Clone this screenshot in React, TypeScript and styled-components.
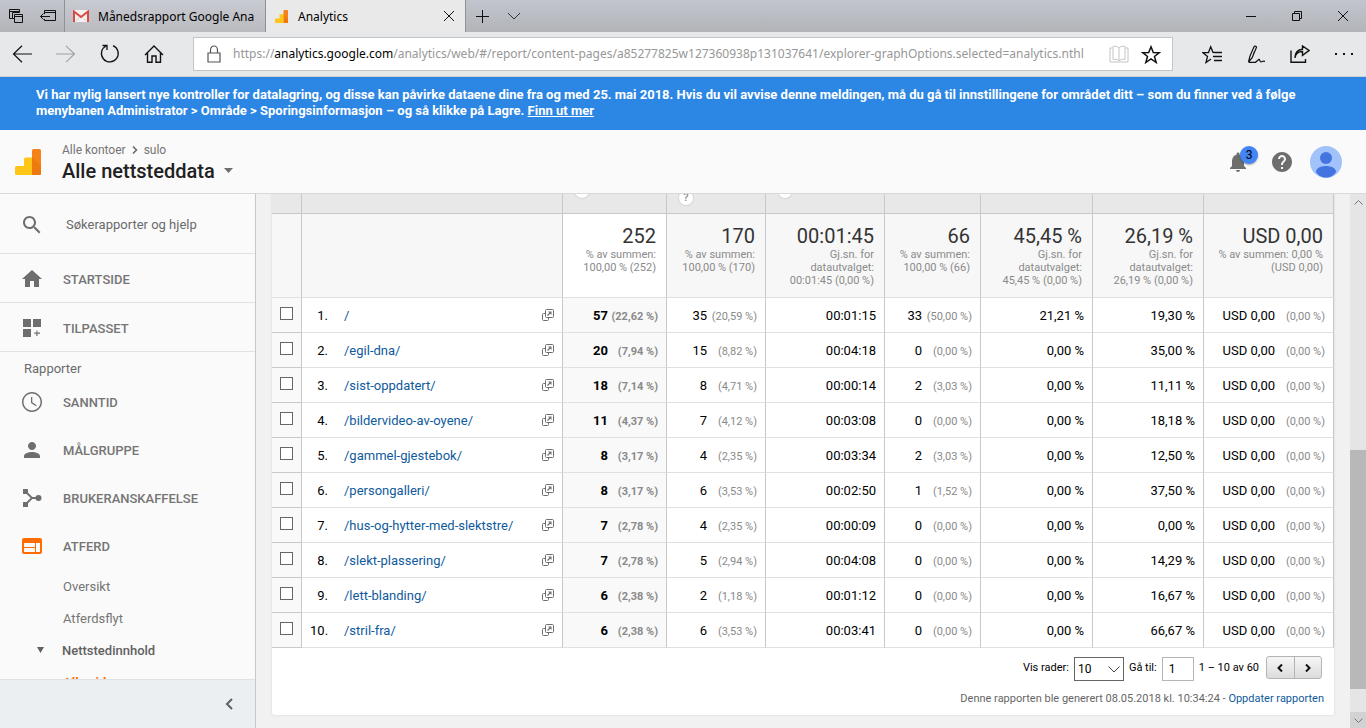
import React from 'react';
import styled, { createGlobalStyle, css } from 'styled-components';

const GlobalStyle = createGlobalStyle`
  *, *::before, *::after { box-sizing: border-box; }
  html, body { margin: 0; height: 100%; }
  body { font-family: Roboto, "Liberation Sans", sans-serif; font-size: 13px; color: #000; background: #f1f1f1; }
  button, input, select { font: inherit; color: inherit; margin: 0; }
  button { padding: 0; border: 0; background: none; display: flex; align-items: center; justify-content: center; }
  a { text-decoration: none; color: inherit; }
  svg { display: block; flex: none; }
`;

const Window = styled.div`
  height: 100vh;
  display: flex;
  flex-direction: column;
  overflow: hidden;
`;

/* ---------- Browser frame ---------- */

const TabStrip = styled.div`
  flex: none;
  height: 32px;
  display: flex;
  background: linear-gradient(#c2c5ce, #b2b4b8);
  font-family: "Noto Sans", "Open Sans", sans-serif;
  font-size: 12px;
`;

const StripButton = styled.button<{ $width: number }>`
  width: ${p => p.$width}px;
  height: 32px;
`;

const BrowserTab = styled.div<{ $active?: boolean }>`
  width: 201px;
  display: flex;
  align-items: center;
  gap: 9px;
  padding: 0 9px 0 8px;
  border-left: 1px solid #8f9196;
  ${p => p.$active
    ? css`background: #e9e9ea; border-right: 1px solid #8f9196; padding: 0 10px 0 9px; gap: 10px;`
    : css`background: linear-gradient(#c9cbd2, #b9bbbf);`}
`;

const TabTitle = styled.span`
  flex: 1;
  min-width: 0;
  overflow: hidden;
  white-space: nowrap;
`;

const Spacer = styled.div`
  flex: 1;
`;

const Toolbar = styled.div`
  flex: none;
  height: 45px;
  display: flex;
  align-items: center;
  background: #e7e8e9;
  border-bottom: 1px solid #cfd0d2;
`;

const ToolButton = styled.button`
  width: 44px;
  height: 44px;
`;

const AddressBox = styled.div`
  flex: 1;
  min-width: 0;
  height: 34px;
  margin: 0 17px;
  padding: 0 11px 0 13px;
  display: flex;
  align-items: center;
  background: #fff;
  border: 1px solid #c4c5c8;
`;

const Url = styled.div`
  flex: 1;
  min-width: 0;
  margin: 0 8px 0 12px;
  overflow: hidden;
  white-space: nowrap;
  font-family: "Noto Sans", "Open Sans", sans-serif;
  font-size: 12px;
  line-height: 20px;
  color: #979797;
  b { font-weight: 400; color: #000; }
`;

const BookWrap = styled.span`
  margin-right: 12px;
`;

/* ---------- Analytics header ---------- */

const Banner = styled.div`
  flex: none;
  padding: 10px 36px 11px;
  background: #2c86e3;
  color: #fff;
  font-weight: 700;
  font-size: 13px;
  line-height: 16px;
  a { text-decoration: underline; }
`;

const Header = styled.header`
  flex: none;
  height: 64px;
  display: flex;
  align-items: center;
  padding: 0 24px 0 15px;
  background: #fafafa;
  border-bottom: 1px solid #d9d9d9;
`;

const Titles = styled.div`
  margin-left: 21px;
  padding-top: 2px;
`;

const Crumbs = styled.nav`
  display: flex;
  align-items: center;
  gap: 6px;
  font-size: 12px;
  line-height: 16px;
  color: #757575;
`;

const ViewButton = styled.button`
  gap: 9px;
  font-size: 20px;
  line-height: 26px;
  font-weight: 500;
  color: #212121;
`;

const BellButton = styled.button`
  position: relative;
  margin-right: 20px;
`;

const Badge = styled.span`
  position: absolute;
  top: -4px;
  right: -8px;
  width: 18px;
  height: 18px;
  border-radius: 9px;
  background: #4285f4;
  box-shadow: 0 1px 2px rgba(0, 0, 0, 0.35);
  font-size: 12px;
  line-height: 18px;
  text-align: center;
`;

const AvatarButton = styled.button`
  margin-left: 16px;
`;

/* ---------- Side navigation ---------- */

const Workspace = styled.div`
  flex: 1;
  min-height: 0;
  display: flex;
`;

const Sidebar = styled.aside`
  flex: none;
  width: 256px;
  display: flex;
  flex-direction: column;
  background: #fafafa;
  border-right: 1px solid #c8c8c8;
  color: #6b6b6b;
`;

const NavScroll = styled.nav`
  flex: 1;
  min-height: 0;
  overflow: hidden;
`;

const SearchRow = styled.label`
  height: 60px;
  display: flex;
  align-items: center;
  gap: 22px;
  padding: 2px 20px 0;
  border-bottom: 1px solid #e2e2e2;
`;

const SearchInput = styled.input`
  width: 160px;
  padding: 0;
  border: 0;
  background: none;
  &::placeholder { color: #6b6b6b; opacity: 1; }
`;

const NavItem = styled.a<{ $ruled?: boolean }>`
  height: ${p => (p.$ruled ? 49 : 48)}px;
  display: flex;
  align-items: center;
  gap: 19px;
  padding: 0 20px;
  font-weight: 500;
  color: #757575;
  ${p => p.$ruled && css`border-bottom: 1px solid #e2e2e2; padding-top: 2px;`}
`;

const NavHeading = styled.div`
  padding: 7px 24px 0;
  line-height: 19px;
`;

const SubItem = styled.a<{ $tone?: 'open' | 'current' }>`
  height: 32px;
  display: flex;
  align-items: center;
  padding-left: 63px;
  color: #757575;
  ${p => p.$tone === 'open' && css`padding-left: 36px; gap: 17px; font-weight: 500; color: #616161;`}
  ${p => p.$tone === 'current' && css`font-weight: 700; color: #ff6d00;`}
`;

const SidebarFooter = styled.div`
  flex: none;
  height: 49px;
  display: flex;
  align-items: center;
  justify-content: flex-end;
  padding-right: 14px;
  background: #ebeff2;
  border-top: 1px solid #dfe2e4;
`;

const CollapseButton = styled.button`
  width: 24px;
  height: 24px;
`;

/* ---------- Report ---------- */

const Main = styled.main`
  flex: 1;
  min-width: 0;
  padding: 0 16px;
  overflow: hidden;
  background: #f1f1f1;
`;

const Card = styled.section`
  background: #fff;
  border-radius: 0 0 2px 2px;
  box-shadow: 0 0 2px rgba(0, 0, 0, 0.16);
`;

const DataTable = styled.table`
  width: 100%;
  table-layout: fixed;
  border-collapse: separate;
  border-spacing: 0;
`;

const Column = styled.col<{ $width?: number }>`
  width: ${p => (p.$width ? `${p.$width}px` : 'auto')};
`;

const HeadCell = styled.th`
  padding: 0;
  background: #e8e8e8;
  border-right: 1px solid #c8c8c8;
  border-bottom: 1px solid #c8c8c8;
`;

const HeadClip = styled.div<{ $low?: boolean }>`
  height: 19px;
  display: flex;
  align-items: flex-end;
  overflow: hidden;
  padding: 0 0 ${p => (p.$low ? 8 : 15)}px 12px;
`;

const HelpDot = styled.span`
  flex: none;
  width: 14px;
  height: 14px;
  border-radius: 7px;
  background: #fff;
  box-shadow: 0 0 1px 1px #d6d6d6;
  color: #8a8a8a;
  font-size: 11px;
  line-height: 14px;
  font-weight: 500;
  text-align: center;
`;

const SummaryCell = styled.td<{ $sorted?: boolean }>`
  height: 84px;
  padding: 10px 10px 8px 4px;
  vertical-align: top;
  text-align: right;
  background: ${p => (p.$sorted ? '#fff' : '#f7f7f7')};
  border-right: 1px solid #c8c8c8;
  border-bottom: 1px solid #e0e0e0;
`;

const SummaryValue = styled.div`
  font-size: 20px;
  line-height: 24px;
  color: #333;
`;

const SummaryNote = styled.div`
  font-size: 11px;
  line-height: 13px;
  color: #8a8a8a;
  white-space: nowrap;
`;

const Cell = styled.td<{ $tinted?: boolean; $bold?: boolean }>`
  height: 35px;
  padding: 0 8px;
  text-align: right;
  white-space: nowrap;
  background: ${p => (p.$tinted ? '#f9f9f9' : '#fff')};
  font-weight: ${p => (p.$bold ? 700 : 400)};
  border-right: 1px solid #c8c8c8;
  border-bottom: 1px solid #e0e0e0;
`;

const CheckCell = styled(Cell)`
  padding: 0 0 4px 8px;
  text-align: left;
  border-bottom-color: #c8c8c8;
`;

const Tick = styled.input`
  display: block;
  appearance: none;
  width: 13px;
  height: 13px;
  margin: 0;
  background: #fff;
  border: 1px solid #666;
`;

const PageCell = styled.div`
  display: flex;
  align-items: center;
`;

const RowNumber = styled.span`
  width: 18px;
  margin-right: 16px;
`;

const PageLink = styled.a`
  flex: 1;
  text-align: left;
  color: #0f5a9c;
`;

const Share = styled.span`
  display: inline-block;
  width: 50px;
  font-size: 11px;
  color: #8a8a8a;
`;

const Pager = styled.div`
  display: flex;
  align-items: center;
  justify-content: flex-end;
  padding: 6px 12px 0;
  font-size: 11px;
`;

const SelectWrap = styled.span`
  display: flex;
  align-items: center;
  width: 50px;
  height: 24px;
  margin: 3px 5px 0;
  background: #fff;
  border: 1px solid #666;
  font-size: 12px;
`;

const RowSelect = styled.select`
  appearance: none;
  flex: 1;
  width: 100%;
  min-width: 0;
  height: 22px;
  padding: 0 3px;
  border: 0;
  background: none;
`;

const SelectArrow = styled.span`
  margin-right: 3px;
  pointer-events: none;
`;

const PageInput = styled.input`
  width: 32px;
  height: 24px;
  margin: 3px 5px 0;
  padding: 0 6px;
  border: 1px solid #b5b5b5;
  background: #fff;
  font-size: 12px;
`;

const StepGroup = styled.div`
  display: flex;
  margin-left: 7px;
  width: 56px;
  height: 23px;
  border: 1px solid #b4b4b4;
  border-radius: 3px;
  background: linear-gradient(#f6f6f6, #dcdcdc);
`;

const StepButton = styled.button`
  flex: 1;
  & + & { border-left: 1px solid #b4b4b4; }
`;

const Generated = styled.div`
  padding: 10px 10px 8px;
  text-align: right;
  font-size: 11px;
  line-height: 16px;
  color: #666;
  a { color: #0f5a9c; }
`;

/* ---------- Scrollbar ---------- */

const Scrollbar = styled.div`
  flex: none;
  width: 16px;
  display: flex;
  flex-direction: column;
  background: #e5e5e5;
`;

const ScrollArrow = styled.button<{ $dark?: boolean }>`
  height: 16px;
  background: ${p => (p.$dark ? '#d2d2d2' : 'transparent')};
`;

const ScrollPart = styled.div<{ $share: number; $thumb?: boolean }>`
  flex: ${p => p.$share} 0 0;
  background: ${p => (p.$thumb ? '#b8b8b8' : 'transparent')};
`;

/* ---------- Icons ---------- */

type StrokeProps = { w: number; h?: number; d: string; color?: string; weight?: number; fill?: string };

const Stroke = ({ w, h = w, d, color = '#111', weight = 1, fill = 'none' }: StrokeProps) => (
  <svg width={w} height={h} viewBox={`0 0 ${w} ${h}`} fill={fill} stroke={color} strokeWidth={weight} aria-hidden="true">
    <path d={d} />
  </svg>
);

const Solid = ({ d, color = '#6e6e6e' }: { d: string; color?: string }) => (
  <svg width={24} height={24} viewBox="0 0 24 24" fill={color} aria-hidden="true">
    <path d={d} />
  </svg>
);

const AnalyticsLogo = ({ size }: { size: number }) => (
  <svg width={size} height={size} viewBox="0 0 26 26" aria-hidden="true">
    <path d="M17 1.500a1.500 1.500 0 0 1 1.500-1.500h6a1.500 1.500 0 0 1 1.500 1.500v23a1.500 1.500 0 0 1-1.500 1.500H17z" fill="#f8821a" />
    <path d="M17 8l9 9v7.500a1.500 1.500 0 0 1-1.500 1.500H17z" fill="#ee7a0d" />
    <path d="M17 8.500H10.500a1.500 1.500 0 0 0-1.500 1.500v7H1.500A1.500 1.500 0 0 0 0 18.500v6A1.500 1.500 0 0 0 1.500 26H17z" fill="#ffc517" />
  </svg>
);

const GmailLogo = () => (
  <svg width="16" height="12" viewBox="0 0 16 12" aria-hidden="true">
    <rect width="16" height="12" rx="1" fill="#f3efef" />
    <path d="M1 12V1.500L8 7l7-5.500V12" fill="none" stroke="#d94a45" strokeWidth="2" />
    <path d="M3 11l4-4M13 11L9 7" stroke="#d9cfcf" strokeWidth="1" />
  </svg>
);

const paths = {
  search: 'M15.500 14h-.79l-.28-.27C15.410 12.590 16 11.110 16 9.500 16 5.910 13.090 3 9.500 3S3 5.910 3 9.500 5.910 16 9.500 16c1.610 0 3.090-.59 4.230-1.570l.27.28v.79l5 4.990L20.490 19l-4.990-5zm-6 0C7.010 14 5 11.990 5 9.500S7.010 5 9.500 5 14 7.010 14 9.500 11.990 14 9.500 14z',
  home: 'M10 20v-6h4v6h5v-8h3L12 3 2 12h3v8z',
  custom: 'M3 3h8v8H3zM13 3h8v8h-8zM3 13h8v8H3zM16.500 14.500h1v2H20v1.200h-2.500V20h-1.200v-2.300H14.200v-1.200h2.300z',
  clock: 'M12 2C6.500 2 2 6.500 2 12s4.500 10 10 10 10-4.500 10-10S17.500 2 12 2zm0 18.500c-4.700 0-8.500-3.800-8.500-8.500S7.300 3.500 12 3.500s8.500 3.800 8.500 8.500-3.800 8.500-8.500 8.500zM12.300 7H11v6l5 3.300.7-1.100-4.400-2.900z',
  person: 'M12 12c2.210 0 4-1.790 4-4s-1.790-4-4-4-4 1.790-4 4 1.790 4 4 4zm0 2c-2.670 0-8 1.340-8 4v2h16v-2c0-2.660-5.330-4-8-4z',
  web: 'M20 4H4c-1.100 0-1.990.9-1.990 2L2 18c0 1.100.9 2 2 2h16c1.100 0 2-.9 2-2V6c0-1.100-.9-2-2-2zm-5 14H4v-4h11v4zm0-5H4V9h11v4zm5 5h-4V9h4v9z',
  help: 'M12 2C6.480 2 2 6.480 2 12s4.480 10 10 10 10-4.480 10-10S17.520 2 12 2zm1 17h-2v-2h2v2zm2.070-7.750l-.9.92C13.450 12.900 13 13.500 13 15h-2v-.5c0-1.100.45-2.100 1.170-2.830l1.240-1.260c.37-.36.59-.86.59-1.410 0-1.100-.9-2-2-2s-2 .9-2 2H8c0-2.210 1.790-4 4-4s4 1.790 4 4c0 .88-.36 1.680-.93 2.250z',
  bell: 'M12 22c1.100 0 2-.9 2-2h-4c0 1.100.89 2 2 2zm6-6v-5c0-3.070-1.640-5.640-4.500-6.320V4c0-.83-.67-1.500-1.500-1.500s-1.500.67-1.500 1.500v.68C7.630 5.360 6 7.920 6 11v5l-2 2v1h16v-1l-2-2z',
};

const AcquisitionIcon = () => (
  <svg width="24" height="24" viewBox="0 0 24 24" fill="#6e6e6e" aria-hidden="true">
    <path d="M3 3h5v5H3zM3 16h5v5H3z" />
    <circle cx="18.500" cy="12" r="3" />
    <path d="M6 6l6 6-6 6M12 12h6" fill="none" stroke="#6e6e6e" strokeWidth="1.800" />
  </svg>
);

const OpenPageIcon = () => (
  <svg width="12" height="12" viewBox="0 0 12 12" fill="none" stroke="#6f6f6f" aria-hidden="true">
    <path d="M3.500 4.500h-2a1 1 0 0 0-1 1v5a1 1 0 0 0 1 1h4a1 1 0 0 0 1-1v-1.500" />
    <rect x="3.500" y="0.500" width="8" height="8" rx="1" />
    <path d="M5.500 6.500l3-3" strokeWidth="1.300" />
    <path d="M6 2.500h3.500V6z" fill="#6f6f6f" stroke="none" />
  </svg>
);

const Avatar = () => (
  <svg width="32" height="32" viewBox="0 0 32 32" aria-hidden="true">
    <circle cx="16" cy="16" r="16" fill="#a1c2fa" />
    <circle cx="16" cy="12" r="6" fill="#4374e0" />
    <path d="M6 26c0-4 5-6 10-6s10 2 10 6c-2.500 4-6 5.500-10 5.500S8.500 30 6 26z" fill="#4374e0" />
  </svg>
);

/* ---------- Data ---------- */

const summary = [
  { value: '252', notes: ['% av summen:', '100,00 % (252)'] },
  { value: '170', notes: ['% av summen:', '100,00 % (170)'] },
  { value: '00:01:45', notes: ['Gj.sn. for', 'datautvalget:', '00:01:45 (0,00 %)'] },
  { value: '66', notes: ['% av summen:', '100,00 % (66)'] },
  { value: '45,45 %', notes: ['Gj.sn. for', 'datautvalget:', '45,45 % (0,00 %)'] },
  { value: '26,19 %', notes: ['Gj.sn. for', 'datautvalget:', '26,19 % (0,00 %)'] },
  { value: 'USD 0,00', notes: ['% av summen: 0,00 %', '(USD 0,00)'] },
];

type Row = [string, string, string, string, string, string, string, string, string, string];

const rows: Row[] = [
  ['/', '57', '22,62', '35', '20,59', '00:01:15', '33', '50,00', '21,21', '19,30'],
  ['/egil-dna/', '20', '7,94', '15', '8,82', '00:04:18', '0', '0,00', '0,00', '35,00'],
  ['/sist-oppdatert/', '18', '7,14', '8', '4,71', '00:00:14', '2', '3,03', '0,00', '11,11'],
  ['/bildervideo-av-oyene/', '11', '4,37', '7', '4,12', '00:03:08', '0', '0,00', '0,00', '18,18'],
  ['/gammel-gjestebok/', '8', '3,17', '4', '2,35', '00:03:34', '2', '3,03', '0,00', '12,50'],
  ['/persongalleri/', '8', '3,17', '6', '3,53', '00:02:50', '1', '1,52', '0,00', '37,50'],
  ['/hus-og-hytter-med-slektstre/', '7', '2,78', '4', '2,35', '00:00:09', '0', '0,00', '0,00', '0,00'],
  ['/slekt-plassering/', '7', '2,78', '5', '2,94', '00:04:08', '0', '0,00', '0,00', '14,29'],
  ['/lett-blanding/', '6', '2,38', '2', '1,18', '00:01:12', '0', '0,00', '0,00', '16,67'],
  ['/stril-fra/', '6', '2,38', '6', '3,53', '00:03:41', '0', '0,00', '0,00', '66,67'],
];

const columnWidths = [30, undefined, 104, 99, 119, 96, 112, 111, 130];

/* ---------- Sections ---------- */

const BrowserFrame = () => (
  <>
    <TabStrip>
      <StripButton $width={32} aria-label="Faner du har lagt til side">
        <Stroke w={14} d="M3.500 9.500h-3v-9h10v3M.5 2.500h10M3.500 9.500h2m-2 0v-6h7M6 5.500h7.500v8H5.500v-8zM5.500 7.500h8" />
      </StripButton>
      <StripButton $width={32} aria-label="Legg faner til side">
        <Stroke w={16} h={12} d="M4.500 4V.5h11v10h-11V9M4.500 2.500h11M10 6.500H.5M3.500 3.500l-3 3 3 3" />
      </StripButton>
      <BrowserTab>
        <GmailLogo />
        <TabTitle>Månedsrapport Google Ana</TabTitle>
      </BrowserTab>
      <BrowserTab $active>
        <AnalyticsLogo size={13} />
        <TabTitle>Analytics</TabTitle>
        <button aria-label="Lukk fane"><Stroke w={12} d="M1 1l10 10M11 1L1 11" /></button>
      </BrowserTab>
      <StripButton $width={32} aria-label="Ny fane"><Stroke w={13} d="M6.500 0v13M0 6.500h13" /></StripButton>
      <StripButton $width={32} aria-label="Vis forhåndsvisninger"><Stroke w={14} h={8} d="M1 1l6 6 6-6" color="#333" /></StripButton>
      <Spacer />
      <StripButton $width={46} aria-label="Minimer"><Stroke w={10} h={1} d="M0 .5h10" /></StripButton>
      <StripButton $width={46} aria-label="Gjenopprett"><Stroke w={10} d="M2.500 2.500v-2h7v7h-2M.5 2.500h7v7h-7z" /></StripButton>
      <StripButton $width={46} aria-label="Lukk"><Stroke w={10} d="M0 0l10 10M10 0L0 10" /></StripButton>
    </TabStrip>
    <Toolbar>
      <ToolButton aria-label="Tilbake"><Stroke w={20} h={18} d="M10 .8L1.500 9l8.500 8.200M1.500 9H20" weight={1.2} /></ToolButton>
      <ToolButton aria-label="Frem"><Stroke w={20} h={18} d="M10 .8L18.500 9l-8.500 8.200M18.500 9H0" color="#a0a0a0" weight={1.1} /></ToolButton>
      <ToolButton aria-label="Oppdater"><Stroke w={20} d="M13 1.700a8.400 8.400 0 1 1-7 .3M2.500 1.500h4.500V6" weight={1.3} /></ToolButton>
      <ToolButton aria-label="Hjem"><Stroke w={20} d="M1 11l9-9 9 9M3.500 9v9.300h4.500V12h4v6.300h4.500V9" weight={1.4} /></ToolButton>
      <AddressBox>
        <Stroke w={14} h={18} d="M1 8h12v9H1zM3.500 8V5a3.500 4 0 0 1 7 0v3" color="#555" weight={1.2} />
        <Url>https://<b>analytics.google.com</b>/analytics/web/#/report/content-pages/a85277825w127360938p131037641/explorer-graphOptions.selected=analytics.nthl</Url>
        <BookWrap>
          <Stroke w={20} h={18} d="M10 3v13M10 3C8 1 5.500 1 4 1.500v13c2-.5 4-.5 6 1.500 2-2 4-2 6-1.500v-13C14.500 1 12 1 10 3zM3.500 3H1v14h18V3h-2.500" color="#c4c4c4" />
        </BookWrap>
        <Stroke w={20} h={19} d="M10 1.800l2.300 5.700 6 .2-4.800 3.800 1.700 6L10 14l-5.200 3.500 1.700-6L1.700 7.700l6-.2z" weight={1.5} />
      </AddressBox>
      <ToolButton aria-label="Hub"><Stroke w={20} h={19} d="M13 7.500L11 7.300 8.700 1.800 6.500 7.500l-5.500.2 4.500 3.800-1.500 6 5-3.500M11 7.500h9M11 11.500h9M12 15.500h8" weight={1.3} /></ToolButton>
      <ToolButton aria-label="Notat"><Stroke w={18} h={19} d="M1.500 17L3 11 7 1.800c1-1.500 3-.5 2.300 1L5 13l-3.500 4M7.500 6.500L5.500 12M1.500 17.300h7l3.500-3c1-.5.500 2.700 2 2.700 1.500-.3 2-1.500 4-.5" weight={1.200} /></ToolButton>
      <ToolButton aria-label="Del"><Stroke w={20} h={18} d="M1 5.500v11.800h14.500V14M5 13c.5-4.500 3.500-6.500 7.500-6.500v3.800L19 5.500 12.500 1v3.200C8 4.500 5 7.500 5 13z" weight={1.4} /></ToolButton>
      <ToolButton aria-label="Mer"><Stroke w={18} h={2} d="M0 1h2M8 1h2M16 1h2" weight={2} /></ToolButton>
    </Toolbar>
  </>
);

const AnalyticsHeader = () => (
  <>
    <Banner>
      Vi har nylig lansert nye kontroller for datalagring, og disse kan påvirke dataene dine fra og med 25. mai 2018. Hvis du vil avvise denne meldingen, må du gå til innstillingene for området ditt – som du finner ved å følge menybanen Administrator &gt; Område &gt; Sporingsinformasjon – og så klikke på Lagre. <a href="#mer">Finn ut mer</a>
    </Banner>
    <Header>
      <AnalyticsLogo size={26} />
      <Titles>
        <Crumbs>
          <a href="#kontoer">Alle kontoer</a>
          <Stroke w={6} h={8} d="M1 .5L4.500 4 1 7.500" color="#666" weight={1.5} />
          <a href="#sulo">sulo</a>
        </Crumbs>
        <ViewButton>
          Alle nettsteddata
          <svg width="9" height="5" viewBox="0 0 9 5" fill="#6e6e6e" aria-hidden="true"><path d="M0 0h9L4.500 5z" /></svg>
        </ViewButton>
      </Titles>
      <Spacer />
      <BellButton aria-label="Varsler">
        <Solid d={paths.bell} />
        <Badge>3</Badge>
      </BellButton>
      <button aria-label="Hjelp"><Solid d={paths.help} /></button>
      <AvatarButton aria-label="Konto"><Avatar /></AvatarButton>
    </Header>
  </>
);

const SideNavigation = () => (
  <Sidebar>
    <NavScroll>
      <SearchRow>
        <Solid d={paths.search} />
        <SearchInput placeholder="Søkerapporter og hjelp" aria-label="Søkerapporter og hjelp" />
      </SearchRow>
      <NavItem href="#start" $ruled><Solid d={paths.home} />STARTSIDE</NavItem>
      <NavItem href="#tilpasset" $ruled><Solid d={paths.custom} />TILPASSET</NavItem>
      <NavHeading>Rapporter</NavHeading>
      <NavItem href="#sanntid"><Solid d={paths.clock} />SANNTID</NavItem>
      <NavItem href="#malgruppe"><Solid d={paths.person} />MÅLGRUPPE</NavItem>
      <NavItem href="#bruker"><AcquisitionIcon />BRUKERANSKAFFELSE</NavItem>
      <NavItem href="#atferd"><Solid d={paths.web} color="#ff6d00" />ATFERD</NavItem>
      <SubItem href="#oversikt">Oversikt</SubItem>
      <SubItem href="#flyt">Atferdsflyt</SubItem>
      <SubItem href="#innhold" $tone="open">
        <svg width="9" height="6" viewBox="0 0 9 6" fill="#616161" aria-hidden="true"><path d="M1 0h7L4.500 6z" /></svg>
        Nettstedinnhold
      </SubItem>
      <SubItem href="#sider" $tone="current">Alle sider</SubItem>
    </NavScroll>
    <SidebarFooter>
      <CollapseButton aria-label="Skjul meny"><Stroke w={8} h={12} d="M7 1L2 6l5 5" color="#616161" weight={2} /></CollapseButton>
    </SidebarFooter>
  </Sidebar>
);

const Report = () => (
  <Main>
    <Card>
      <DataTable>
        <colgroup>
          {columnWidths.map((width, i) => <Column key={i} $width={width} />)}
        </colgroup>
        <thead>
          <tr>
            {columnWidths.map((_, i) => (
              <HeadCell key={i}>
                <HeadClip $low={i === 3}>
                  {i >= 2 && i <= 4 && <HelpDot>{i === 3 ? '?' : ''}</HelpDot>}
                </HeadClip>
              </HeadCell>
            ))}
          </tr>
        </thead>
        <tbody>
          <tr>
            <SummaryCell />
            <SummaryCell />
            {summary.map((s, i) => (
              <SummaryCell key={i} $sorted={i === 0}>
                <SummaryValue>{s.value}</SummaryValue>
                {s.notes.map(note => <SummaryNote key={note}>{note}</SummaryNote>)}
              </SummaryCell>
            ))}
          </tr>
          {rows.map(([page, views, viewShare, unique, uniqueShare, time, entries, entryShare, bounce, exit], i) => (
            <tr key={page}>
              <CheckCell $tinted><Tick type="checkbox" aria-label={`Velg ${page}`} /></CheckCell>
              <Cell>
                <PageCell>
                  <RowNumber>{i + 1}.</RowNumber>
                  <PageLink href={`#${page}`}>{page}</PageLink>
                  <OpenPageIcon />
                </PageCell>
              </Cell>
              <Cell $tinted $bold>{views}<Share>({viewShare} %)</Share></Cell>
              <Cell>{unique}<Share>({uniqueShare} %)</Share></Cell>
              <Cell>{time}</Cell>
              <Cell>{entries}<Share>({entryShare} %)</Share></Cell>
              <Cell>{bounce} %</Cell>
              <Cell>{exit} %</Cell>
              <Cell>USD 0,00<Share>(0,00 %)</Share></Cell>
            </tr>
          ))}
        </tbody>
      </DataTable>
      <Pager>
        <label htmlFor="row-count">Vis rader:</label>
        <SelectWrap>
          <RowSelect id="row-count" defaultValue="10"><option>10</option><option>25</option></RowSelect>
          <SelectArrow><Stroke w={12} h={7} d="M.5.5L6 6 11.500.5" color="#444" /></SelectArrow>
        </SelectWrap>
        <label htmlFor="go-to">Gå til:</label>
        <PageInput id="go-to" defaultValue="1" />
        <span>1 – 10 av 60</span>
        <StepGroup>
          <StepButton aria-label="Forrige"><Stroke w={6} h={8} d="M5 .5L1.500 4 5 7.500" weight={2} /></StepButton>
          <StepButton aria-label="Neste"><Stroke w={6} h={8} d="M1 .5L4.500 4 1 7.500" weight={2} /></StepButton>
        </StepGroup>
      </Pager>
      <Generated>
        Denne rapporten ble generert 08.05.2018 kl. 10:34:24 - <a href="#oppdater">Oppdater rapporten</a>
      </Generated>
    </Card>
  </Main>
);

export default function App() {
  return (
    <Window>
      <GlobalStyle />
      <BrowserFrame />
      <AnalyticsHeader />
      <Workspace>
        <SideNavigation />
        <Report />
        <Scrollbar>
          <ScrollArrow aria-label="Rull opp"><Stroke w={9} h={5} d="M.5 4.500l4-4 4 4" color="#777" /></ScrollArrow>
          <ScrollPart $share={240} />
          <ScrollPart $share={239} $thumb />
          <ScrollPart $share={23} />
          <ScrollArrow $dark aria-label="Rull ned"><Stroke w={9} h={5} d="M.5.5l4 4 4-4" color="#777" /></ScrollArrow>
        </Scrollbar>
      </Workspace>
    </Window>
  );
}
